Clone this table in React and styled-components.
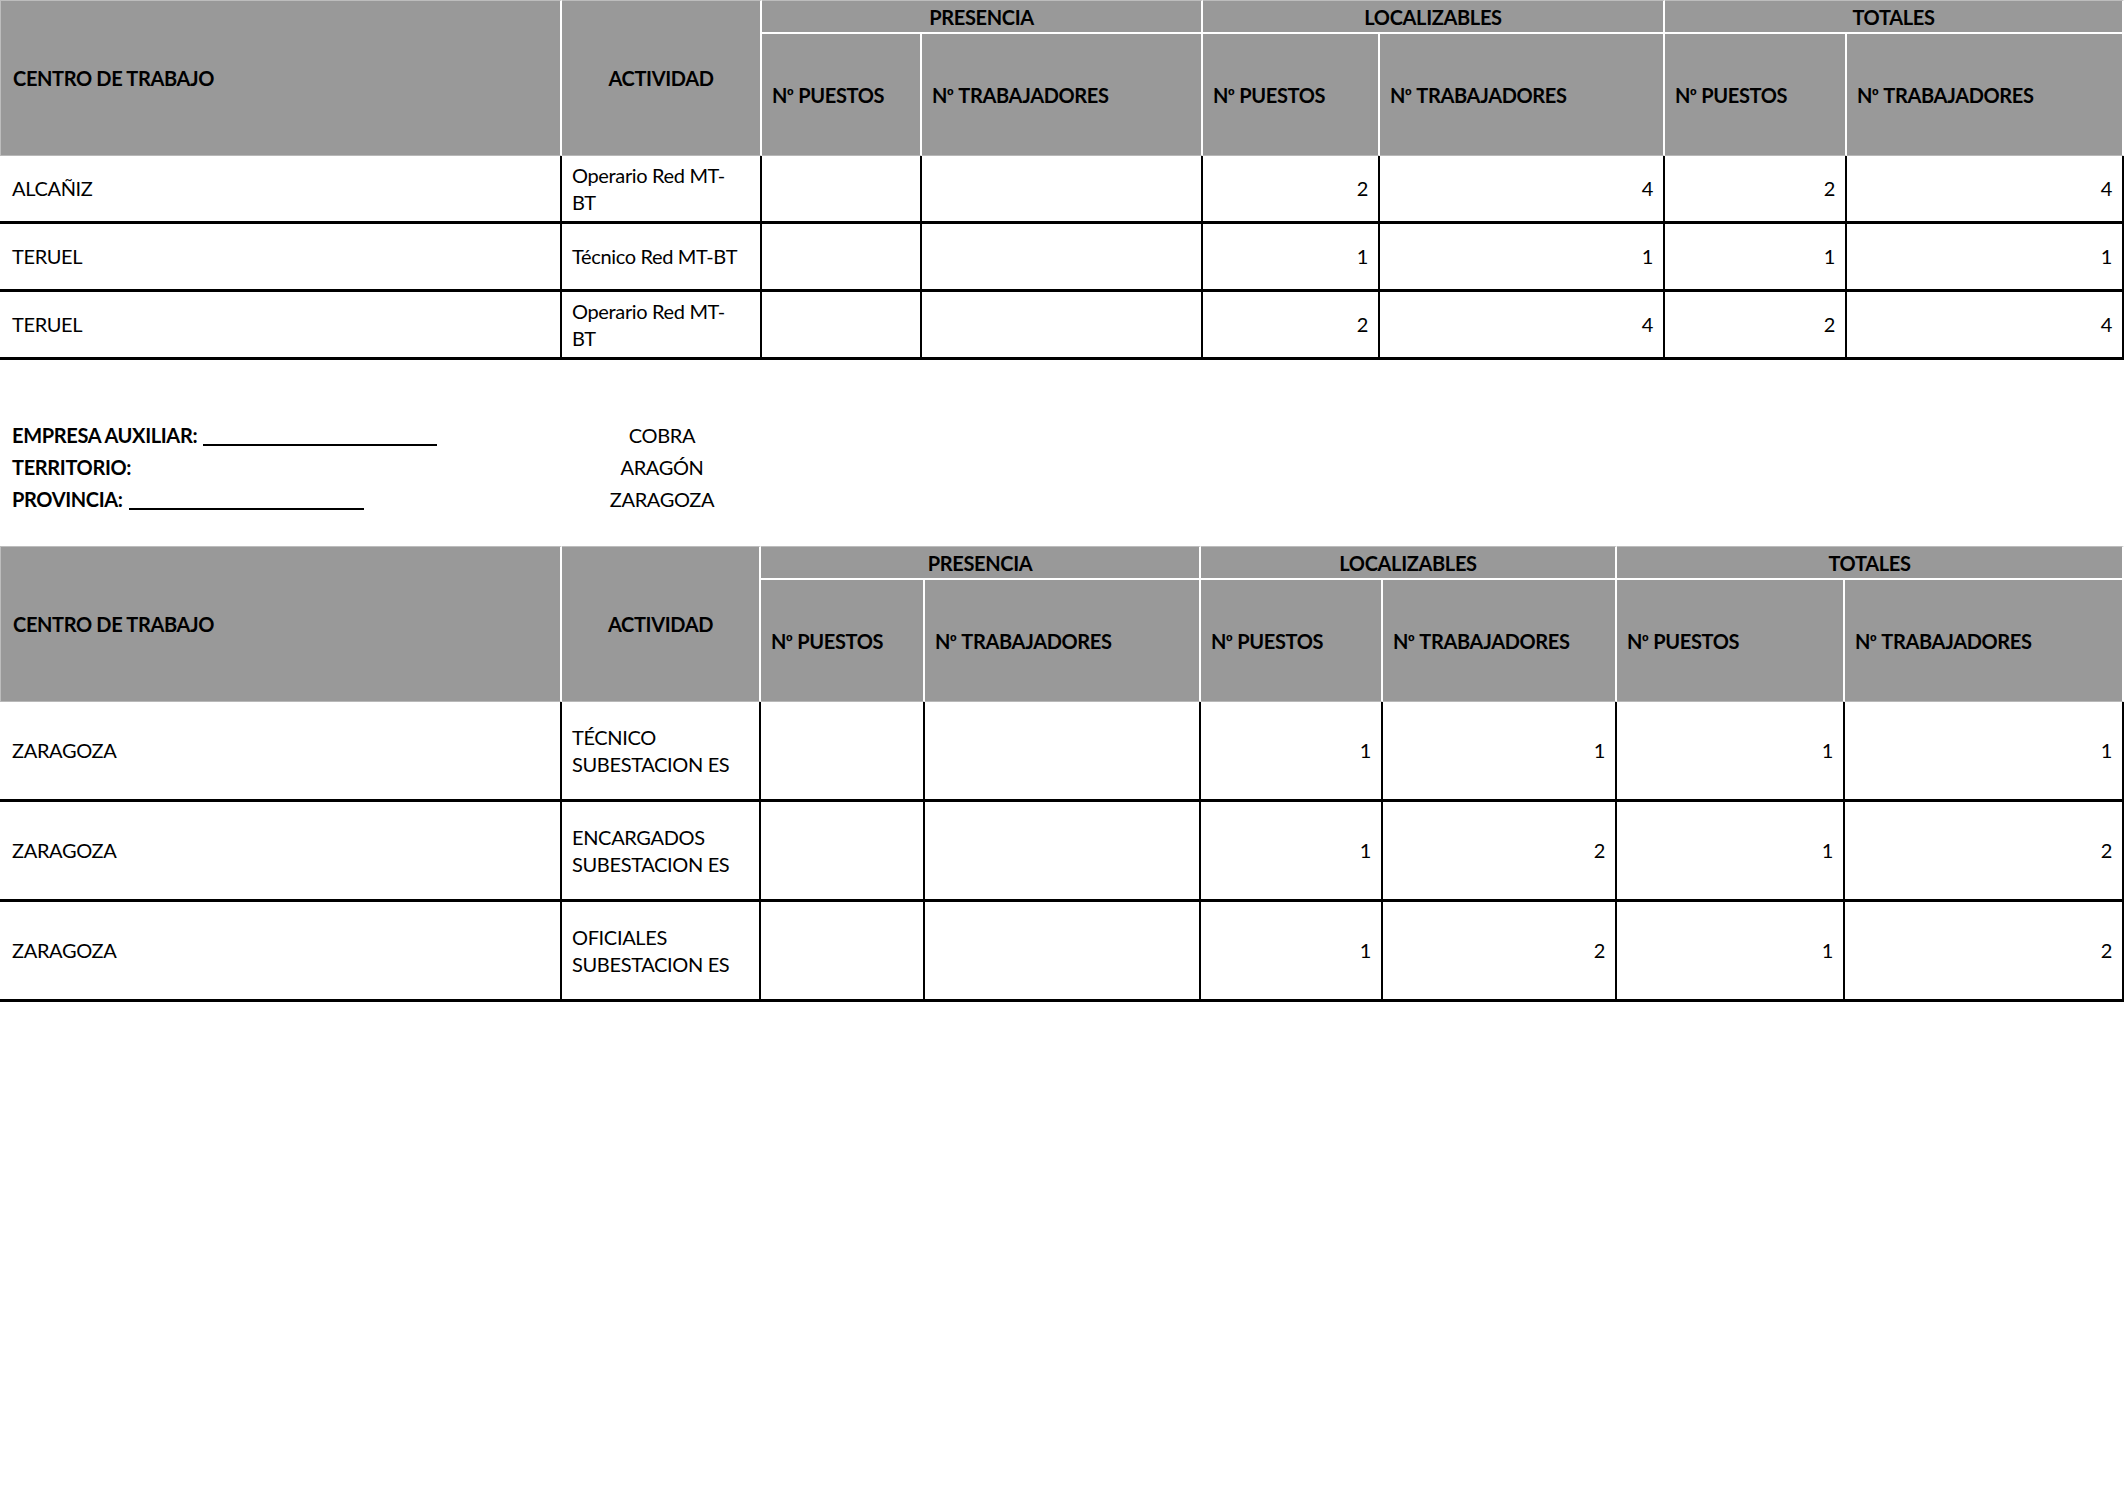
import React from "react"
import styled, { createGlobalStyle } from "styled-components"

const GlobalStyle = createGlobalStyle`
  html, body {
    margin: 0;
    padding: 0;
    background: #fff;
  }
  body {
    font-family: Lato, "Open Sans", "Liberation Sans", sans-serif;
    font-size: 20px;
    letter-spacing: -0.35px;
    color: #000;
  }
`

const Page = styled.div`
  width: 2126px;
  min-height: 1494px;
`

const Grid = styled.div`
  display: grid;
  width: 2124px;
  grid-template-columns: ${props => props.cols.map(c => `${c}px`).join(" ")};
  grid-template-rows: 34px 122px repeat(${props => props.rows}, ${props => props.rowH}px);
`

const HeadCell = styled.div`
  box-sizing: border-box;
  display: flex;
  align-items: center;
  justify-content: ${props => (props.center ? "center" : "flex-start")};
  padding: 0 10px 0 ${props => (props.first ? "12px" : "10px")};
  background: #999999;
  font-weight: 700;
  white-space: nowrap;
  line-height: 1;
  border-right: 2px solid #fff;
  border-top: ${props => (props.top ? "1px solid #bdbdbd" : "none")};
  border-left: ${props => (props.first ? "1px solid #bdbdbd" : "none")};
  border-bottom: ${props => (props.group ? "2px solid #fff" : "1px solid #b8b8b8")};
  grid-row: ${props => (props.tall ? "span 2" : "auto")};
  grid-column: ${props => (props.group ? "span 2" : "auto")};
`

/* Lato draws º without the bar, so take it from a face that has one */
const Ord = styled.span`
  font-family: "Liberation Sans", "DejaVu Sans", sans-serif;
  font-size: 18px;
  margin-right: 5px;
`

const Cell = styled.div`
  box-sizing: border-box;
  display: flex;
  flex-direction: column;
  justify-content: center;
  align-items: ${props => (props.num ? "flex-end" : "flex-start")};
  padding: 0 10px 0 ${props => (props.first ? "12px" : "10px")};
  line-height: 27px;
  white-space: nowrap;
  border-right: 2px solid #000;
  border-bottom: 3px solid #000;
`

const Info = styled.div`
  display: grid;
  grid-template-columns: 562px 200px;
  line-height: 32px;
  margin: 59px 0 31px;
`

const Label = styled.div`
  padding-left: 12px;
  font-weight: 700;
  white-space: nowrap;
`

const Value = styled.div`
  text-align: center;
`

const Blank = styled.span`
  display: inline-block;
  width: ${props => props.w}px;
  border-bottom: 2px solid #000;
  vertical-align: -3px;
  margin-left: 6px;
`

const tables = [
  {
    cols: [562, 200, 160, 281, 177, 285, 182, 277],
    rowH: 68,
    rows: [
      { centro: "ALCAÑIZ", act: ["Operario Red MT-", "BT"], vals: ["", "", 2, 4, 2, 4] },
      { centro: "TERUEL", act: ["Técnico Red MT-BT"], vals: ["", "", 1, 1, 1, 1] },
      { centro: "TERUEL", act: ["Operario Red MT-", "BT"], vals: ["", "", 2, 4, 2, 4] }
    ]
  },
  {
    cols: [562, 199, 164, 276, 182, 234, 228, 279],
    rowH: 100,
    rows: [
      { centro: "ZARAGOZA", act: ["TÉCNICO", "SUBESTACION ES"], vals: ["", "", 1, 1, 1, 1] },
      { centro: "ZARAGOZA", act: ["ENCARGADOS", "SUBESTACION ES"], vals: ["", "", 1, 2, 1, 2] },
      { centro: "ZARAGOZA", act: ["OFICIALES", "SUBESTACION ES"], vals: ["", "", 1, 2, 1, 2] }
    ]
  }
]

const groups = ["PRESENCIA", "LOCALIZABLES", "TOTALES"]

const StaffTable = ({ cols, rowH, rows }) => (
  <Grid cols={cols} rowH={rowH} rows={rows.length}>
    <HeadCell tall top first>CENTRO DE TRABAJO</HeadCell>
    <HeadCell tall top center>ACTIVIDAD</HeadCell>
    {groups.map(g => (
      <HeadCell key={g} group top center>
        {g}
      </HeadCell>
    ))}
    {groups.map(g => (
      <React.Fragment key={g}>
        <HeadCell>
          N<Ord>º</Ord>PUESTOS
        </HeadCell>
        <HeadCell>
          N<Ord>º</Ord>TRABAJADORES
        </HeadCell>
      </React.Fragment>
    ))}
    {rows.map((r, i) => (
      <React.Fragment key={i}>
        <Cell first>{r.centro}</Cell>
        <Cell>
          {r.act.map(line => (
            <span key={line}>{line}</span>
          ))}
        </Cell>
        {r.vals.map((v, j) => (
          <Cell key={j} num>
            {v}
          </Cell>
        ))}
      </React.Fragment>
    ))}
  </Grid>
)

export default function App() {
  return (
    <Page>
      <GlobalStyle />
      <StaffTable {...tables[0]} />
      <Info>
        <Label>
          EMPRESA AUXILIAR:<Blank w={234} />
        </Label>
        <Value>COBRA</Value>
        <Label>TERRITORIO:</Label>
        <Value>ARAGÓN</Value>
        <Label>
          PROVINCIA:<Blank w={235} />
        </Label>
        <Value>ZARAGOZA</Value>
      </Info>
      <StaffTable {...tables[1]} />
    </Page>
  )
}
